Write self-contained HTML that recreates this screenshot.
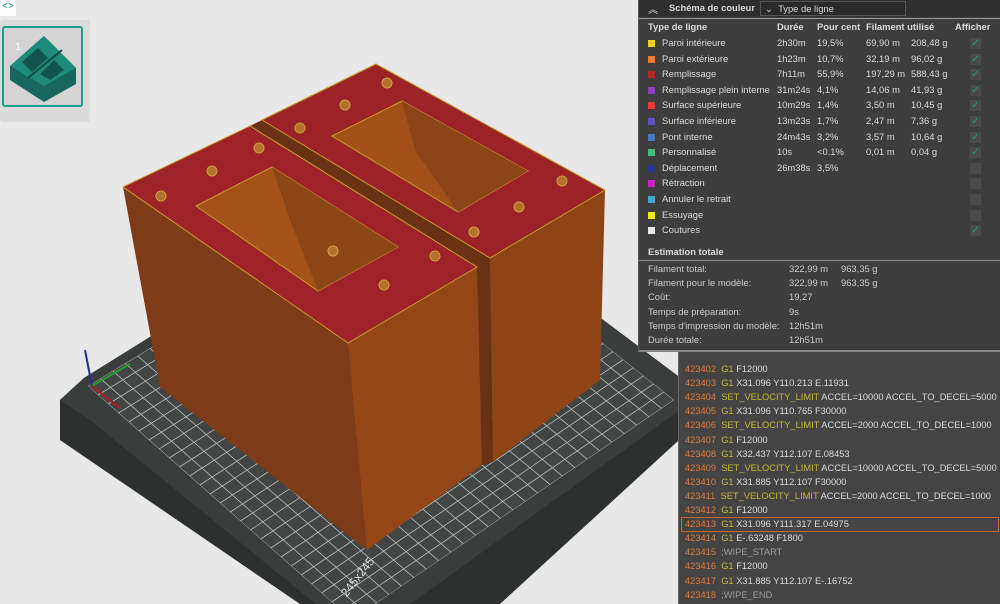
<!DOCTYPE html>
<html><head><meta charset="utf-8"><style>
*{margin:0;padding:0;box-sizing:border-box}
body{width:1000px;height:604px;overflow:hidden;background:#e8e8e9;font-family:"Liberation Sans","DejaVu Sans",sans-serif;position:relative}
.p{position:absolute;left:638px;top:0;width:362px;height:352px;background:#3d3d3d;color:#dcdcdc;font-size:9.4px;border-left:1px solid #555;border-bottom:2px solid #888;overflow:hidden}
.hd{height:17px;background:#2f2f2f;position:relative}
.r{position:absolute;left:0;height:14px;line-height:14px;white-space:nowrap}
.sq{position:absolute;left:9px;top:4px;width:7px;height:7px}
.cb{position:absolute;left:331px;top:2px;width:11px;height:11px;background:#4a4a4a;color:#1aa089;font-size:10px;line-height:11px;text-align:center}
.g{position:absolute;left:678px;top:352px;width:322px;height:252px;background:#444;font-size:9.3px;color:#dcdcdc;border-left:1px solid #666;overflow:hidden}
.gl{position:absolute;left:6px;height:14px;line-height:14px;white-space:nowrap}
.n{color:#e07a3c}.y{color:#c8b82c}.c{color:#9a9a9a}
</style></head><body>
<svg width="1000" height="604" style="position:absolute;left:0;top:0">
<defs><clipPath id="gc"><polygon points="88,386 410,190 674,400 352,620"/></clipPath></defs>
<polygon points="60,400 84,378 410,175 690,385 690,430 500,604 300,604 60,440" fill="#2e3030"/>
<polygon points="60,400 84,378 410,175 690,385 680,410 360,640 90,420" fill="#3b3d3d"/>
<polygon points="88,386 410,190 674,400 352,620" fill="#434545"/>
<g id="grid" clip-path="url(#gc)" stroke="#b8bcbc" stroke-width="0.8"></g>
<line x1="92" y1="386" x2="85" y2="350" stroke="#1c2f9c" stroke-width="2"/>
<line x1="92" y1="386" x2="130" y2="364" stroke="#23a030" stroke-width="2"/>
<line x1="92" y1="386" x2="120" y2="408" stroke="#b01c1c" stroke-width="2"/>
<polygon points="123,187 348,343 367,550 160,387" fill="#7e3b17"/>
<polygon points="348,343 477,267 482,465 367,550" fill="#954617"/>
<polygon points="250,126 262,120 490,258 493,462 482,465 477,267" fill="#6a3212"/>
<polygon points="490,258 605,190 600,380 493,462" fill="#8f4416"/>
<polygon points="262,120 376,64 605,190 490,258" fill="#9b2328" stroke="#c79a2a" stroke-width="1"/>
<polygon points="332,136 402,101 528,171 458,212" fill="#a05018" stroke="#c79a2a" stroke-width="1"/>
<polygon points="402,101 528,171 458,212 415,150" fill="#8a4417"/>
<polygon points="123,187 250,126 477,267 348,343" fill="#9d2328" stroke="#c79a2a" stroke-width="1"/>
<polygon points="196,206 272,167 398,247 318,291" fill="#a45219" stroke="#c79a2a" stroke-width="1"/>
<polygon points="272,167 398,247 318,291 290,220" fill="#8b4517"/>
<g fill="#b5702c" stroke="#d0a040" stroke-width="1">
<circle cx="161" cy="196" r="5"/><circle cx="212" cy="171" r="5"/><circle cx="259" cy="148" r="5"/>
<circle cx="333" cy="251" r="5"/><circle cx="384" cy="285" r="5"/><circle cx="435" cy="256" r="5"/>
<circle cx="300" cy="128" r="5"/><circle cx="345" cy="105" r="5"/><circle cx="387" cy="83" r="5"/>
<circle cx="474" cy="232" r="5"/><circle cx="519" cy="207" r="5"/><circle cx="562" cy="181" r="5"/>
</g>
<text x="340" y="596" transform="rotate(-52 345 590)" fill="#ddd" font-size="12" font-family="Liberation Sans">245x245</text>
</svg>
<div style="position:absolute;left:0;top:0;width:16px;height:16px;background:#fff;color:#1aa089;font-size:10px;line-height:14px;text-align:center">&lt;&gt;</div>
<div style="position:absolute;left:0;top:20px;width:90px;height:102px;background:#dadada;border-radius:3px"></div>
<div style="position:absolute;left:2px;top:26px;width:81px;height:81px;border:2px solid #1aa089;border-radius:3px;background:#d4d4d4">
<svg width="77" height="77"><polygon points="6,38 40,8 72,40 72,56 40,74 6,52" fill="#17675c"/><polygon points="6,38 40,8 72,40 40,58" fill="#1e8a7a"/><polygon points="18,34 34,20 44,30 28,44" fill="#12544b"/><polygon points="36,46 50,32 60,42 46,52" fill="#12544b"/><line x1="24" y1="50" x2="58" y2="22" stroke="#0e4a42" stroke-width="2"/><text x="11" y="22" fill="#fff" font-size="11">1</text></svg></div>
<div class="p">
<div class="hd"><span style="position:absolute;left:9px;top:1px;font-size:10px">︽</span><b style="position:absolute;left:30px;top:2px">Schéma de couleur</b>
<div style="position:absolute;left:121px;top:1px;width:146px;height:15px;background:#2a2a2a;border:1px solid #555;padding-left:4px;line-height:13px">⌄ &nbsp;Type de ligne</div></div>
<div style="height:1px;background:#999;margin-top:1px"></div>
<div class="r" style="top:20px;font-weight:bold;width:100%"><span style="position:absolute;left:9px">Type de ligne</span><span style="position:absolute;left:138px">Durée</span><span style="position:absolute;left:178px">Pour cent</span><span style="position:absolute;left:227px">Filament utilisé</span><span style="position:absolute;left:316px">Afficher</span></div>
<div id="rows"></div>
<div style="position:absolute;left:0;top:244px;width:100%;border-bottom:1px solid #888;height:17px"><b style="position:absolute;left:9px;top:2px">Estimation totale</b></div>
<div id="est"></div>
</div>
<div class="g"><div style="position:absolute;left:2px;top:165px;width:318px;height:15px;border:1px solid #c06a30"></div><div id="gc2"></div></div>
<script>
var g=document.getElementById('grid'),A=[88,386],B=[410,190],C=[674,400],D=[352,620],N=26,s='';
for(var i=0;i<=N;i++){var t=i/N;
s+='<line x1="'+(A[0]+(D[0]-A[0])*t)+'" y1="'+(A[1]+(D[1]-A[1])*t)+'" x2="'+(B[0]+(C[0]-B[0])*t)+'" y2="'+(B[1]+(C[1]-B[1])*t)+'"/>';
s+='<line x1="'+(A[0]+(B[0]-A[0])*t)+'" y1="'+(A[1]+(B[1]-A[1])*t)+'" x2="'+(D[0]+(C[0]-D[0])*t)+'" y2="'+(D[1]+(C[1]-D[1])*t)+'"/>';}
g.innerHTML=s;
var R=[["#f0d020","Paroi intérieure","2h30m","19,5%","69,90 m","208,48 g",1],["#f07830","Paroi extérieure","1h23m","10,7%","32,19 m","96,02 g",1],["#b02a26","Remplissage","7h11m","55,9%","197,29 m","588,43 g",1],["#9040c0","Remplissage plein interne","31m24s","4,1%","14,06 m","41,93 g",1],["#e83838","Surface supérieure","10m29s","1,4%","3,50 m","10,45 g",1],["#6050c8","Surface inférieure","13m23s","1,7%","2,47 m","7,36 g",1],["#4878c0","Pont interne","24m43s","3,2%","3,57 m","10,64 g",1],["#40c080","Personnalisé","10s","<0.1%","0,01 m","0,04 g",1],["#283890","Déplacement","26m38s","3,5%","","",0],["#d020c8","Rétraction","","","","",0],["#40a8d0","Annuler le retrait","","","","",0],["#f0f000","Essuyage","","","","",0],["#e8e8e8","Coutures","","","","",1]];
var h='';R.forEach(function(r,i){h+='<div class="r" style="top:'+(36+i*15.6)+'px;width:100%"><div class="sq" style="background:'+r[0]+'"></div><span style="position:absolute;left:23px">'+r[1]+'</span><span style="position:absolute;left:138px">'+r[2]+'</span><span style="position:absolute;left:178px">'+r[3]+'</span><span style="position:absolute;left:227px">'+r[4]+'</span><span style="position:absolute;left:272px">'+r[5]+'</span><div class="cb">'+(r[6]?'✓':'')+'</div></div>';});
document.getElementById('rows').innerHTML=h;
var E=[["Filament total:","322,99 m","963,35 g"],["Filament pour le modèle:","322,99 m","963,35 g"],["Coût:","19,27",""],["Temps de préparation:","9s",""],["Temps d'impression du modèle:","12h51m",""],["Durée totale:","12h51m",""]];
h='';E.forEach(function(e,i){h+='<div class="r" style="top:'+(262+i*14.2)+'px;width:100%;color:#ccc"><span style="position:absolute;left:9px">'+e[0]+'</span><span style="position:absolute;left:150px">'+e[1]+'</span><span style="position:absolute;left:202px">'+e[2]+'</span></div>';});
document.getElementById('est').innerHTML=h;
var G=[["G1","F12000"],["G1","X31.096 Y110.213 E.11931"],["SET_VELOCITY_LIMIT","ACCEL=10000 ACCEL_TO_DECEL=5000"],["G1","X31.096 Y110.765 F30000"],["SET_VELOCITY_LIMIT","ACCEL=2000 ACCEL_TO_DECEL=1000"],["G1","F12000"],["G1","X32.437 Y112.107 E.08453"],["SET_VELOCITY_LIMIT","ACCEL=10000 ACCEL_TO_DECEL=5000"],["G1","X31.885 Y112.107 F30000"],["SET_VELOCITY_LIMIT","ACCEL=2000 ACCEL_TO_DECEL=1000"],["G1","F12000"],["G1","X31.096 Y111.317 E.04975"],["G1","E-.63248 F1800"],[";WIPE_START",""],["G1","F12000"],["G1","X31.885 Y112.107 E-.16752"],[";WIPE_END",""]];
h='';G.forEach(function(e,i){h+='<div class="gl" style="top:'+(10+i*14.1)+'px"><span class="n">'+(423402+i)+'</span>&nbsp; <span class="'+(e[0][0]==';'?'c':'y')+'">'+e[0]+'</span> '+e[1]+'</div>';});
document.getElementById('gc2').innerHTML=h;
</script>
</body></html>
